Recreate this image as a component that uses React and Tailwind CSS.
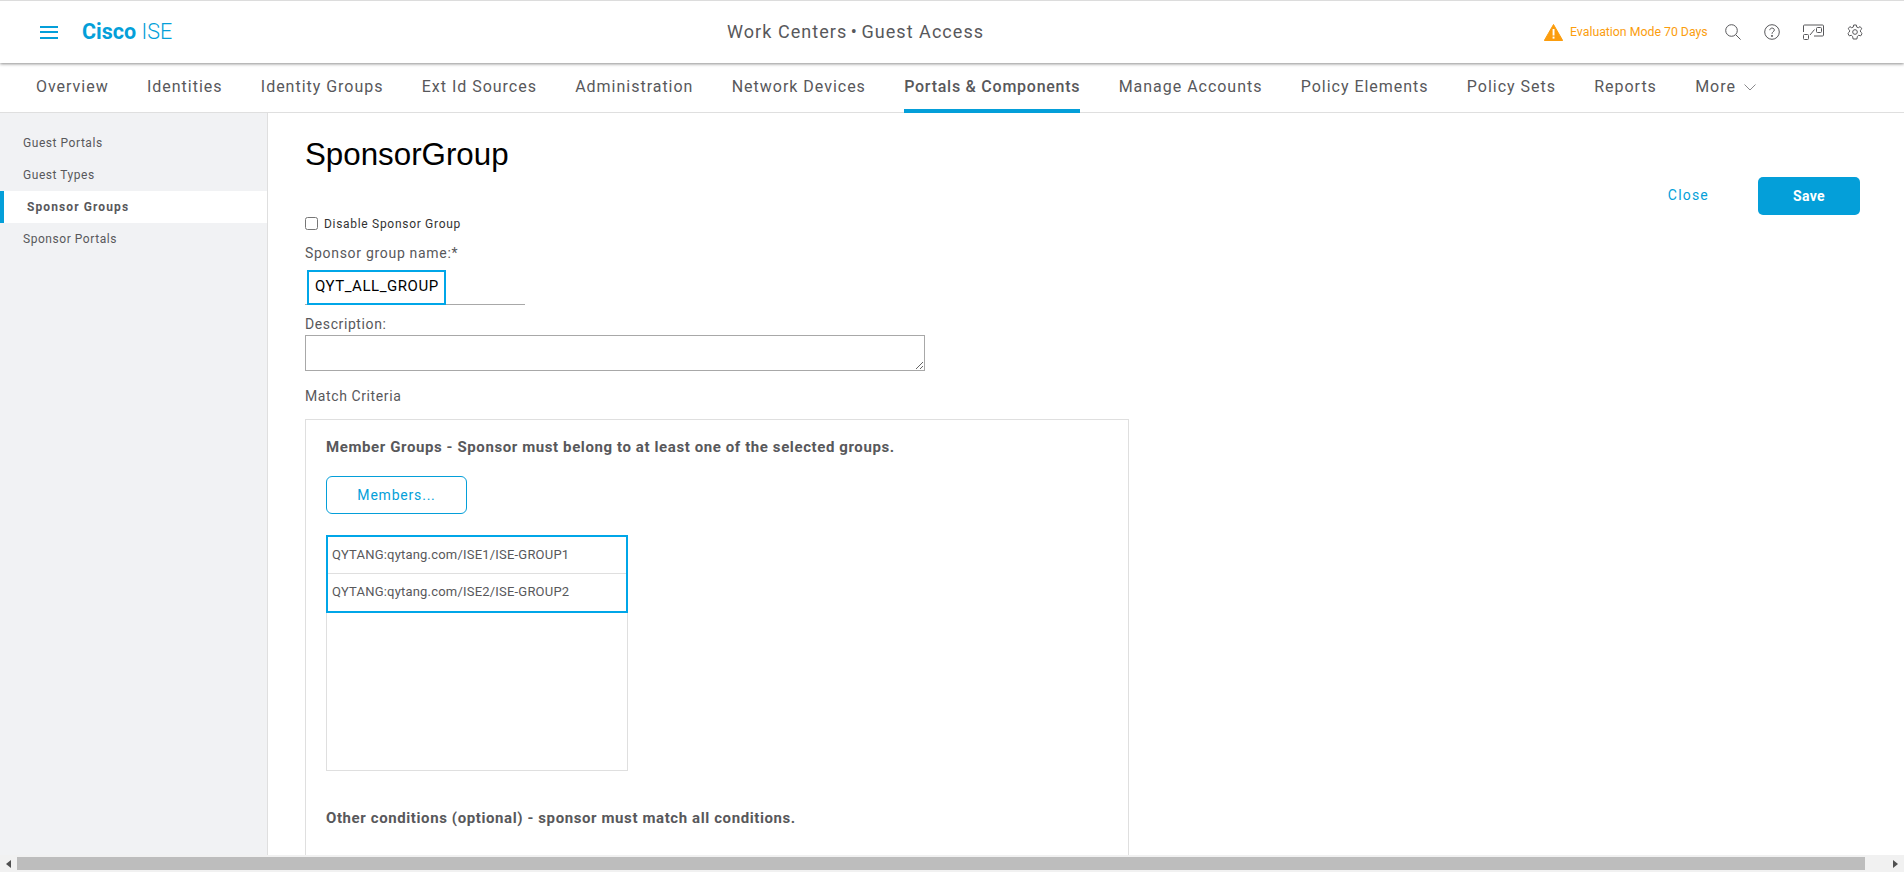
import React from "react";

const tabs = ["Overview","Identities","Identity Groups","Ext Id Sources","Administration","Network Devices","Portals & Components","Manage Accounts","Policy Elements","Policy Sets","Reports"];

function HeaderIcons() {
  return (
    <div className="flex items-center">
      <svg width="19" height="17" viewBox="0 0 19 17" className="mr-[7px]">
        <path d="M9.5 0.5 L18.7 16.5 H0.3 Z" fill="#fb9d0e" stroke="#fb9d0e" strokeLinejoin="round" />
        <rect x="8.6" y="5" width="1.9" height="6.5" fill="#fff" />
        <rect x="8.6" y="12.6" width="1.9" height="2" fill="#fff" />
      </svg>
      <span className="text-[12.3px] text-[#fb9d0e] w-[134px] whitespace-nowrap">Evaluation Mode 70 Days</span>
      <svg width="16" height="16" viewBox="0 0 16 16" fill="none" stroke="#58585b" className="ml-[21px]">
        <circle cx="6.5" cy="6.5" r="5.8" />
        <path d="M10.8 10.8 L15.6 15.6" />
      </svg>
      <svg width="16" height="16" viewBox="0 0 16 16" fill="none" stroke="#58585b" className="ml-[23px]">
        <circle cx="8" cy="8" r="7.3" />
        <path d="M5.8 6.2 C5.8 3.4 10.3 3.4 10.3 6 C10.3 7.8 8 7.8 8 9.8" />
        <circle cx="8" cy="11.9" r="0.6" fill="#58585b" />
      </svg>
      <svg width="21" height="16" viewBox="0 0 21 16" fill="none" stroke="#58585b" className="ml-[23px]">
        <path d="M0.5 8 V2 Q0.5 1 1.5 1 H19.5 Q20.5 1 20.5 2 V11 Q20.5 12 19.5 12 H11" />
        <rect x="0.5" y="10.5" width="5" height="5" rx="1" />
        <rect x="13.5" y="3.5" width="5" height="5" rx="1" />
        <path d="M7 11 L11.5 5.5" />
      </svg>
      <svg width="16" height="16" viewBox="0 0 24 24" fill="none" stroke="#58585b" strokeWidth="1.5" className="ml-[23px]">
        <circle cx="12" cy="12" r="3.5" />
        <path d="M10 1.5 H14 L14.6 4.6 L17 5.6 L19.7 3.9 L22.3 7.2 L20 9.4 L20.4 12 L22.6 14.2 L20.6 17.8 L17.6 16.9 L15.6 18.6 L14.8 22.5 H9.2 L8.4 18.6 L6.4 16.9 L3.4 17.8 L1.4 14.2 L3.6 12 L4 9.4 L1.7 7.2 L4.3 3.9 L7 5.6 L9.4 4.6 Z" strokeLinejoin="round" />
      </svg>
    </div>
  );
}

export default function App() {
  return (
    <div className="h-[872px] w-[1904px] overflow-hidden flex flex-col bg-white font-['Roboto',sans-serif] text-[#58585b]">
      <header className="relative z-10 h-[63px] shrink-0 flex items-center border-t border-[#dcdcdc] bg-white shadow-[0_1px_3px_rgba(0,0,0,0.45)] pl-[40px] pr-[41px]">
        <div className="w-[18px] flex flex-col gap-[3.5px] mr-[24px]">
          <div className="h-[2px] bg-[#049fd9]" />
          <div className="h-[2px] bg-[#049fd9]" />
          <div className="h-[2px] bg-[#049fd9]" />
        </div>
        <div className="text-[21.5px] text-[#049fd9] whitespace-nowrap w-[645px]">
          <span className="font-bold">Cisco</span> <span className="font-light">ISE</span>
        </div>
        <div className="text-[18px] tracking-[1.05px] whitespace-nowrap flex-1 pb-[2px]">Work Centers <span className="-mx-[2px]">•</span> Guest Access</div>
        <HeaderIcons />
      </header>

      <nav className="h-[50px] shrink-0 flex items-stretch gap-[38.3px] pl-[36px] border-b border-[#dfdfdf] text-[16px] tracking-[0.98px]">
        {tabs.map((t) => (
          <div key={t} className={"flex items-center whitespace-nowrap border-b-[4px] pt-[2px] -mb-px " + (t === "Portals & Components" ? "border-[#049fd9] font-medium tracking-[0.75px]" : "border-transparent")}>{t}</div>
        ))}
        <div className="flex items-center gap-[8px] pt-[2px] border-b-[4px] border-transparent -mb-px">
          More
          <svg width="12" height="7" viewBox="0 0 12 7" fill="none" stroke="#8a8a8d"><path d="M0.5 0.5 L6 6 L11.5 0.5" /></svg>
        </div>
      </nav>

      <div className="flex-1 flex min-h-0 overflow-hidden">
        <aside className="w-[268px] shrink-0 bg-[#f1f2f4] border-r border-[#dfdfdf] pt-[14px] text-[12px] tracking-[0.55px]">
          <div className="h-[32px] flex items-center pl-[23px]">Guest Portals</div>
          <div className="h-[32px] flex items-center pl-[23px]">Guest Types</div>
          <div className="h-[32px] flex items-center pl-[23px] bg-white border-l-[4px] border-[#049fd9] font-bold tracking-[1.1px]">Sponsor Groups</div>
          <div className="h-[32px] flex items-center pl-[23px]">Sponsor Portals</div>
        </aside>

        <main className="flex-1 flex min-w-0">
          <div className="flex-1 pl-[37px] font-['Liberation_Sans',sans-serif]">
            <h1 className="text-[31.3px] leading-[36px] text-black mt-[24px]">SponsorGroup</h1>
            <label className="flex items-center mt-[43px] h-[16px] text-[12px] text-[#333]">
              <input type="checkbox" className="m-0 w-[13px] h-[13px] -mt-[2px]" />
              <span className="ml-[6px] font-['Roboto',sans-serif] tracking-[0.7px]">Disable Sponsor Group</span>
            </label>
            <div className="mt-[11px] text-[14px] leading-[20px] font-['Roboto',sans-serif] tracking-[0.7px]">Sponsor group name:*</div>
            <div className="mt-[7px] w-[220px] h-[35px] border-b border-[#a8a8a8]">
              <div className="ml-[2px] w-[139px] h-[35px] border-2 border-[#00a6e8] flex items-center pl-[6px] pb-[3px] text-[15px] text-black font-['Roboto',sans-serif] tracking-[0.55px]">QYT_ALL_GROUP</div>
            </div>
            <div className="mt-[9px] text-[14px] leading-[20px] font-['Roboto',sans-serif] tracking-[0.6px]">Description:</div>
            <textarea className="block mt-[1px] w-[620px] h-[36px] border border-[#a8a8a8]" />
            <div className="mt-[15px] text-[14px] leading-[20px] font-['Roboto',sans-serif] tracking-[0.6px]">Match Criteria</div>
            <section className="mt-[13px] w-[824px] h-[500px] border border-[#dfdfdf] pl-[20px] pt-[18px] font-['Roboto',sans-serif]">
              <div className="text-[15px] leading-[18px] font-bold tracking-[0.6px]">Member Groups - Sponsor must belong to at least one of the selected groups.</div>
              <button className="block mt-[20px] w-[141px] h-[38px] rounded-[6px] border border-[#049fd9] text-[14px] text-[#049fd9] tracking-[0.8px]">Members...</button>
              <div className="mt-[21px] w-[302px] h-[236px] border border-[#dfdfdf]">
                <div className="h-[78px] border-2 border-[#00a6e8] -m-px text-[13px] tracking-[0.2px]">
                  <div className="h-[37px] flex items-center pl-[4px] border-b border-[#dfdfdf]">QYTANG:qytang.com/ISE1/ISE-GROUP1</div>
                  <div className="h-[36px] flex items-center pl-[4px]">QYTANG:qytang.com/ISE2/ISE-GROUP2</div>
                </div>
              </div>
              <div className="mt-[38px] text-[15px] leading-[18px] font-bold tracking-[0.6px]">Other conditions (optional) - sponsor must match all conditions.</div>
            </section>
          </div>
          <div className="w-[300px] shrink-0 flex items-start justify-end pt-[64px] pr-[44px]">
            <span className="h-[38px] flex items-center mr-[49px] pb-[2px] text-[14px] text-[#049fd9] tracking-[1.2px]">Close</span>
            <button className="w-[102px] h-[38px] rounded-[5px] bg-[#049fd9] text-white text-[14px] font-bold tracking-[0.4px]">Save</button>
          </div>
        </main>
      </div>

      <div className="h-[17px] shrink-0 bg-[#f1f1f1] flex items-start pt-[2px]">
        <div className="w-[17px] h-[13px] flex items-center justify-center">
          <svg width="5" height="8" viewBox="0 0 5 8"><path d="M5 0 L0 4 L5 8 Z" fill="#505050" /></svg>
        </div>
        <div className="w-[1848px] h-[13px] bg-[#bdbdbd]" />
        <div className="flex-1 h-[13px] flex items-center justify-end pr-[6px]">
          <svg width="5" height="8" viewBox="0 0 5 8"><path d="M0 0 L5 4 L0 8 Z" fill="#505050" /></svg>
        </div>
      </div>
    </div>
  );
}
